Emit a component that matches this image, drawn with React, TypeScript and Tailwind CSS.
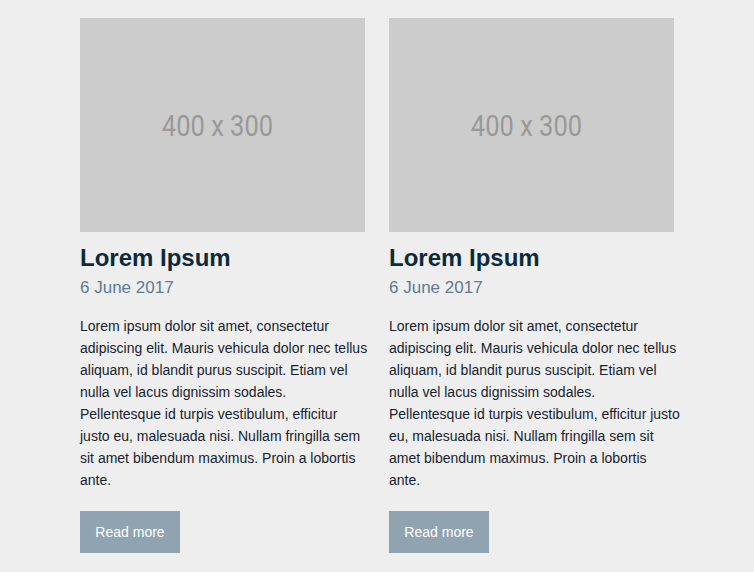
const body =
  'Lorem ipsum dolor sit amet, consectetur adipiscing elit. Mauris vehicula dolor nec tellus aliquam, id blandit purus suscipit. Etiam vel nulla vel lacus dignissim sodales. Pellentesque id turpis vestibulum, efficitur justo eu, malesuada nisi. Nullam fringilla sem sit amet bibendum maximus. Proin a lobortis ante.';

function Card() {
  return (
    <article className="flex flex-col items-start">
      <div className="flex h-[214px] w-[285px] items-center justify-center bg-[#cccccc]">
        <span className="mr-[10px] mt-[2px] inline-block scale-x-[0.85] text-[30px] leading-none text-[#999999] [font-family:Roboto,sans-serif]">
          400 x 300
        </span>
      </div>
      <h2 className="mt-[12px] text-[24px] font-bold leading-[1.15] text-[#0d2a3b]">Lorem Ipsum</h2>
      <p className="mt-[6px] text-[17px] leading-[1.15] text-[#5e7b91]">6 June 2017</p>
      <p className="mt-[18px] text-[14px] leading-[22px] text-[#16232e]">{body}</p>
      <a
        href="#"
        className="mt-[20px] flex h-[42px] w-[100px] items-center justify-center bg-[#8fa3b1] text-[14px] text-white"
      >
        Read more
      </a>
    </article>
  );
}

export default function App() {
  return (
    <div className="min-h-[572px] bg-[#eeeeee] [font-family:'Liberation_Sans',Arial,sans-serif]">
      <div className="grid grid-cols-[289px_291px] gap-x-[20px] pl-[80px] pt-[18px]">
        <Card />
        <Card />
      </div>
    </div>
  );
}
